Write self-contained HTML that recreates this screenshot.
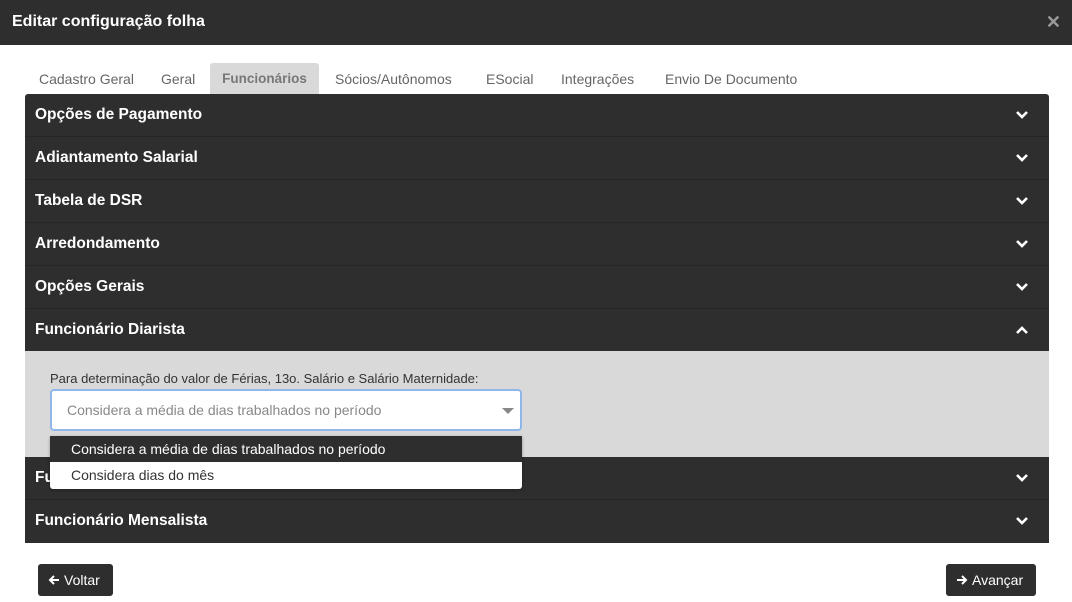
<!DOCTYPE html>
<html><head><meta charset="utf-8"><style>
*{box-sizing:border-box;margin:0;padding:0}
body{width:1072px;height:602px;background:#fff;font-family:"Liberation Sans",Arial,sans-serif;position:relative;overflow:hidden}
.hdr{position:absolute;left:0;top:0;width:1072px;height:45px;background:#2e2e2e;color:#fff;font-weight:bold;font-size:16px;padding:13px 12px}
.x{position:absolute;right:11px;top:12px;color:#9a9a9a;font-size:18px;font-weight:bold}
.tab{position:absolute;top:63px;font-size:14px;color:#666;padding-top:8px;height:31px;white-space:nowrap}
.tab.a{background:#d9d9d9;border-radius:3px 3px 0 0;color:#777;font-weight:bold;left:210px;width:109px;text-align:center;font-size:13.5px}
.acc{position:absolute;left:25px;top:94px;width:1024px;background:#2e2e2e;border-radius:3px 3px 0 0}
.row{height:43px;border-bottom:1px solid #262626;color:#fff;font-weight:bold;font-size:15.5px;padding:12px 10px;position:relative}
.row svg{position:absolute;right:20px;top:16px}
.body{height:106px;background:#d9d9d9;position:relative}
.lbl{position:absolute;left:25px;top:20px;font-size:13px;color:#333}
.sel{position:absolute;left:25px;top:38px;width:472px;height:42px;background:#fff;border:2px solid #8fb7ea;border-radius:4px;font-size:14px;color:#888;padding:11px 15px}
.caret{position:absolute;right:6px;top:17px;width:0;height:0;border-left:6px solid transparent;border-right:6px solid transparent;border-top:6px solid #888}
.dd{position:absolute;left:50px;top:436px;width:472px;height:53px;background:#fff;border-radius:0 0 3px 3px;box-shadow:0 1px 3px rgba(0,0,0,.3);font-size:14px}
.o{height:26px;padding:5px 21px;color:#333}
.o.a{background:#2e2e2e;color:#fff}
.btn{position:absolute;top:564px;height:32px;background:#2e2e2e;color:#fff;border-radius:3px;font-size:14px;padding:8px 10px;white-space:nowrap}
.btn svg{vertical-align:-1px;margin-right:4px}
</style></head><body>
<div class="hdr">Editar configuração folha<span class="x">✕</span></div>
<div class="tab" style="left:39px">Cadastro Geral</div>
<div class="tab" style="left:161px">Geral</div>
<div class="tab a">Funcionários</div>
<div class="tab" style="left:335px">Sócios/Autônomos</div>
<div class="tab" style="left:486px">ESocial</div>
<div class="tab" style="left:561px">Integrações</div>
<div class="tab" style="left:665px">Envio De Documento</div>
<div class="acc">
<div class="row">Opções de Pagamento<svg width="14" height="10" viewBox="0 0 14 10"><path d="M2 2l5 5 5-5" stroke="#fff" stroke-width="2.6" fill="none"/></svg></div>
<div class="row">Adiantamento Salarial<svg width="14" height="10" viewBox="0 0 14 10"><path d="M2 2l5 5 5-5" stroke="#fff" stroke-width="2.6" fill="none"/></svg></div>
<div class="row">Tabela de DSR<svg width="14" height="10" viewBox="0 0 14 10"><path d="M2 2l5 5 5-5" stroke="#fff" stroke-width="2.6" fill="none"/></svg></div>
<div class="row">Arredondamento<svg width="14" height="10" viewBox="0 0 14 10"><path d="M2 2l5 5 5-5" stroke="#fff" stroke-width="2.6" fill="none"/></svg></div>
<div class="row">Opções Gerais<svg width="14" height="10" viewBox="0 0 14 10"><path d="M2 2l5 5 5-5" stroke="#fff" stroke-width="2.6" fill="none"/></svg></div>
<div class="row" style="height:42px;border:0">Funcionário Diarista<svg width="14" height="10" viewBox="0 0 14 10"><path d="M2 8l5-5 5 5" stroke="#fff" stroke-width="2.6" fill="none"/></svg></div>
<div class="body"><div class="lbl">Para determinação do valor de Férias, 13o. Salário e Salário Maternidade:</div>
<div class="sel">Considera a média de dias trabalhados no período<span class="caret"></span></div></div>
<div class="row">Funcionário Horista<svg width="14" height="10" viewBox="0 0 14 10"><path d="M2 2l5 5 5-5" stroke="#fff" stroke-width="2.6" fill="none"/></svg></div>
<div class="row" style="border:0">Funcionário Mensalista<svg width="14" height="10" viewBox="0 0 14 10"><path d="M2 2l5 5 5-5" stroke="#fff" stroke-width="2.6" fill="none"/></svg></div>
</div>
<div class="dd"><div class="o a">Considera a média de dias trabalhados no período</div><div class="o">Considera dias do mês</div></div>
<div class="btn" style="left:38px;width:75px"><svg width="12" height="12" viewBox="0 0 12 12"><path d="M11 6H2M6 2L2 6l4 4" stroke="#fff" stroke-width="2" fill="none"/></svg>Voltar</div>
<div class="btn" style="left:946px;width:90px"><svg width="12" height="12" viewBox="0 0 12 12"><path d="M1 6h9M6 2l4 4-4 4" stroke="#fff" stroke-width="2" fill="none"/></svg>Avançar</div>
</body></html>
